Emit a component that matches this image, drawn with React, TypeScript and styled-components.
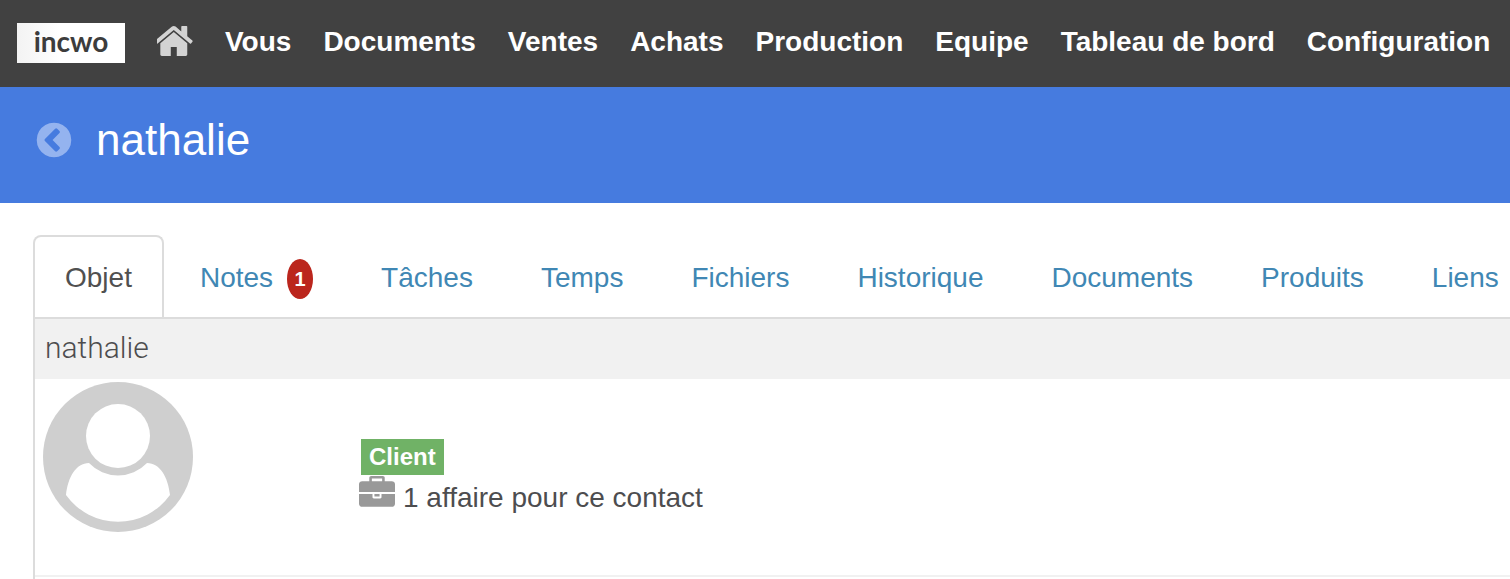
import React from "react";
import styled, { createGlobalStyle } from "styled-components";

const GlobalStyle = createGlobalStyle`
  * { box-sizing: border-box; }
  body {
    margin: 0;
    background: #fff;
    color: #4d4d4f;
    font-family: "Liberation Sans", Arial, Helvetica, sans-serif;
    font-size: 28px;
    line-height: 40px;
    overflow-x: hidden;
  }
  a { text-decoration: none; }
`;

const TopBar = styled.header`
  display: flex;
  align-items: flex-start;
  padding: 22px 16px 24px;
  background: #414141;
`;

const Logo = styled.a`
  flex: none;
  margin: 1px 32px 0 1px;
  width: 108px;
  height: 40px;
  background: linear-gradient(90deg, #f3f3f3, #fff 40%);
  color: #3c3c3c;
  font-family: Lato, "Liberation Sans", sans-serif;
  font-weight: 700;
  line-height: 36px;
  text-align: center;
`;

const HomeLink = styled.a`
  flex: none;
  display: flex;
  padding: 4px 0;
  margin-right: 32px;
  color: #d3d3d3;
`;

const MainNav = styled.nav`
  display: flex;
  gap: 32px;
`;

const NavLink = styled.a`
  color: #fff;
  font-weight: 700;
  white-space: nowrap;
`;

const TitleBar = styled.div`
  display: flex;
  align-items: center;
  gap: 24px;
  padding: 24px 36px 34px;
  background: #467bdf;
`;

const BackButton = styled.button`
  display: flex;
  padding: 0;
  border: 0;
  background: none;
  color: #94b3ef;
  cursor: pointer;
`;

const Title = styled.h1`
  margin: 0;
  color: #fff;
  font-size: 44px;
  font-weight: 400;
  line-height: 58px;
`;

const Main = styled.main`
  padding: 32px 0 0 33px;
`;

const Tabs = styled.nav`
  display: flex;
  gap: 4px;
  border-bottom: 2px solid #dcdcdc;
`;

const Tab = styled.a<{ $active?: boolean }>`
  flex: none;
  display: flex;
  align-items: flex-start;
  gap: 14px;
  padding: 22px 30px 18px;
  border: 2px solid ${(p) => (p.$active ? "#dcdcdc" : "transparent")};
  border-bottom: 0;
  border-radius: 8px 8px 0 0;
  color: ${(p) => (p.$active ? "#505050" : "#4087b4")};
  line-height: 38px;
  white-space: nowrap;
`;

const Count = styled.span`
  width: 26px;
  height: 40px;
  border-radius: 50%;
  background: #bb261d;
  color: #fff;
  font-size: 20px;
  font-weight: 700;
  line-height: 40px;
  text-align: center;
`;

const Panel = styled.section`
  border-left: 2px solid #dcdcdc;
  padding-bottom: 2px;
`;

const PanelTitle = styled.h2`
  margin: 0;
  padding: 0 10px 2px;
  background: #f1f1f1;
  font-family: Roboto, "Liberation Sans", sans-serif;
  font-size: 30px;
  font-weight: 300;
  line-height: 58px;
`;

const Contact = styled.div`
  display: flex;
  gap: 166px;
  padding: 3px 8px 43px;
  border-bottom: 2px solid #f1f1f1;
`;

const Details = styled.div`
  padding-top: 57px;
`;

const Status = styled.span`
  display: block;
  width: fit-content;
  margin-left: 2px;
  padding: 0 8px;
  background: #70b266;
  color: #fff;
  font-size: 24px;
  font-weight: 700;
  line-height: 36px;
`;

const Deals = styled.div`
  display: flex;
  gap: 8px;
  color: #4d4d4f;

  svg { margin-top: 1px; color: #999; }
  span { padding-top: 3px; }
`;

const HomeIcon = () => (
  <svg width="36" height="30" viewBox="130 253 1508 1283" fill="currentColor" aria-hidden="true">
    <path d="M1408 992v480q0 26-19 45t-45 19h-384v-384h-256v384h-384q-26 0-45-19t-19-45v-480q0-1 .5-3t.5-3l575-474 575 474q1 2 1 6zm223-69l-62 74q-8 9-21 11h-3q-13 0-21-7l-692-577-692 577q-12 8-24 7-13-2-21-11l-62-74q-8-10-7-23.5t11-21.5l719-599q32-26 76-26t76 26l244 204v-195q0-14 9-23t23-9h192q14 0 23 9t9 23v408l219 182q10 8 11 21.5t-7 23.5z" />
  </svg>
);

const BackIcon = () => (
  <svg width="36" height="36" viewBox="96 96 1600 1600" fill="currentColor" aria-hidden="true">
    <path d="M1037 1395l102-102q19-19 19-45t-19-45l-307-307 307-307q19-19 19-45t-19-45l-102-102q-19-19-45-19t-45 19l-454 454q-19 19-19 45t19 45l454 454q19 19 45 19t45-19zm627-499q0 209-103 385.5t-279.5 279.5-385.5 103-385.5-103-279.5-279.5-103-385.5 103-385.5 279.5-279.5 385.5-103 385.5 103 279.5 279.5 103 385.5z" />
  </svg>
);

const BriefcaseIcon = () => (
  <svg width="36" height="32" viewBox="0 0 1792 1593" fill="currentColor" aria-hidden="true">
    <path d="M640 256h512v-128h-512v128zm1152 640v480q0 66-47 113t-113 47h-1472q-66 0-113-47t-47-113v-480h672v160q0 26 19 45t45 19h320q26 0 45-19t19-45v-160h672zm-768 0v128h-256v-128h256zm768-480v384h-1792v-384q0-66 47-113t113-47h352v-160q0-40 28-68t68-28h576q40 0 68 28t28 68v160h352q66 0 113 47t47 113z" />
  </svg>
);

const Avatar = () => (
  <svg width="150" height="150" viewBox="0 0 150 150" role="img" aria-label="nathalie">
    <circle cx="75" cy="75" r="75" fill="#cfcfcf" />
    <circle cx="75" cy="54" r="32" fill="#fff" />
    <path d="M23 113C25 95 33 81 46 81A40 40 0 0 0 104 81C117 81 125 95 127 113A64 64 0 0 1 23 113Z" fill="#fff" />
  </svg>
);

const navItems = [
  "Vous",
  "Documents",
  "Ventes",
  "Achats",
  "Production",
  "Equipe",
  "Tableau de bord",
  "Configuration",
];

const tabs: { label: string; count?: number }[] = [
  { label: "Objet" },
  { label: "Notes", count: 1 },
  { label: "Tâches" },
  { label: "Temps" },
  { label: "Fichiers" },
  { label: "Historique" },
  { label: "Documents" },
  { label: "Produits" },
  { label: "Liens" },
];

export default function App() {
  return (
    <>
      <GlobalStyle />
      <TopBar>
        <Logo href="#">incwo</Logo>
        <HomeLink href="#" aria-label="Accueil">
          <HomeIcon />
        </HomeLink>
        <MainNav>
          {navItems.map((item) => (
            <NavLink key={item} href="#">
              {item}
            </NavLink>
          ))}
        </MainNav>
      </TopBar>
      <TitleBar>
        <BackButton type="button" aria-label="Retour">
          <BackIcon />
        </BackButton>
        <Title>nathalie</Title>
      </TitleBar>
      <Main>
        <Tabs>
          {tabs.map(({ label, count }, index) => (
            <Tab key={label} href="#" $active={index === 0}>
              {label}
              {count !== undefined && <Count>{count}</Count>}
            </Tab>
          ))}
        </Tabs>
        <Panel>
          <PanelTitle>nathalie</PanelTitle>
          <Contact>
            <Avatar />
            <Details>
              <Status>Client</Status>
              <Deals>
                <BriefcaseIcon />
                <span>1 affaire pour ce contact</span>
              </Deals>
            </Details>
          </Contact>
        </Panel>
      </Main>
    </>
  );
}
